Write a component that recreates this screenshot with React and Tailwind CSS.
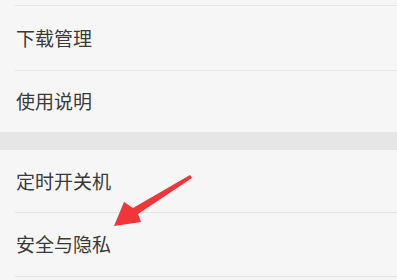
export default function App() {
    const Divider = () => <div className="ml-[15px] h-px bg-[#e4e4e4]" />;
    const Row = ({ label, h }) => (
        <div className={`flex items-center pl-[16px] text-[19px] text-[#3a3a3a] ${h}`}>{label}</div>
    );

    return (
        <div
            className="relative w-[397px] h-[280px] overflow-hidden bg-[#f6f6f6]"
            style={{ fontFamily: '"Noto Sans CJK SC", "Noto Sans", sans-serif' }}
        >
            <div className="h-[5px]" />
            <Divider />
            <Row label="下载管理" h="h-[64px]" />
            <Divider />
            <Row label="使用说明" h="h-[61px]" />
            <div className="h-[18px] bg-[#e6e6e6]" />
            <Row label="定时开关机" h="h-[62px]" />
            <Divider />
            <Row label="安全与隐私" h="h-[63px]" />
            <Divider />

            {/* red arrow */}
            <svg className="absolute left-0 top-0" width="397" height="280" viewBox="0 0 397 280">
                <polygon
                    points="114,226 124,202 133,208 190,175 192,178 138,214 141,222"
                    fill="#f0353b"
                />
            </svg>
        </div>
    );
}
